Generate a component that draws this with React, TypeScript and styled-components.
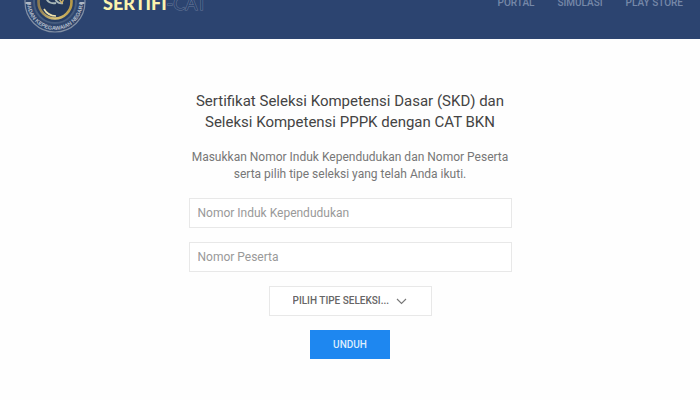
import React from "react";
import styled, { createGlobalStyle } from "styled-components";

const GlobalStyle = createGlobalStyle`
  * { box-sizing: border-box; }
  body {
    margin: 0;
    background: #fefefe;
    font-family: Roboto, "Liberation Sans", sans-serif;
    color: #666;
  }
`;

const Header = styled.header`
  display: flex;
  align-items: flex-end;
  height: 39px;
  overflow: hidden;
  background: #2c4470;
`;

const Bar = styled.div`
  flex: 1;
  display: flex;
  align-items: center;
  justify-content: space-between;
  height: 73px;
  padding: 0 17px 0 23px;
`;

const Brand = styled.a`
  display: flex;
  align-items: center;
  gap: 16px;
  text-decoration: none;
`;

const Wordmark = styled.span`
  font: 900 18px/20px Lato, sans-serif;
  color: #fbf3ae;
  white-space: nowrap;
`;

const Outlined = styled.span`
  font-weight: 400;
  color: #2c4470;
  -webkit-text-stroke: 1px #67799a;
  paint-order: stroke;
`;

const Nav = styled.nav`
  display: flex;
  gap: 23px;
`;

const NavLink = styled.a`
  font-size: 10px;
  font-weight: 500;
  line-height: 14px;
  color: #7688a8;
  text-decoration: none;
  text-transform: uppercase;
`;

const Content = styled.main`
  display: flex;
  justify-content: center;
  padding: 52px 16px 40px;
`;

const Form = styled.form`
  display: flex;
  flex-direction: column;
  align-items: center;
  width: 100%;
  max-width: 323px;
  text-align: center;
`;

const Title = styled.h1`
  margin: 0 0 16px;
  font-size: 15px;
  line-height: 21px;
  font-weight: 400;
  color: #444;
  white-space: nowrap;
`;

const Intro = styled.p`
  margin: 0 0 15px;
  font-size: 12px;
  line-height: 17px;
  color: #777;
  white-space: nowrap;
`;

const Field = styled.input`
  width: 100%;
  height: 30px;
  margin-bottom: 14px;
  padding: 0 8px;
  border: 1px solid #e8e8e8;
  border-radius: 0;
  background: #fff;
  font: 400 12px/18px Roboto, sans-serif;
  color: #555;
  &::placeholder { color: #999; opacity: 1; }
`;

const SelectBox = styled.div`
  display: grid;
  align-items: center;
  margin-bottom: 14px;
  svg {
    grid-area: 1 / 1;
    justify-self: end;
    margin-right: 25px;
    pointer-events: none;
  }
`;

const Select = styled.select`
  grid-area: 1 / 1;
  appearance: none;
  width: 163px;
  height: 30px;
  padding: 0 32px 0 23px;
  border: 1px solid #e8e8e8;
  border-radius: 0;
  background: #fff;
  font: 500 10px/16px Roboto, sans-serif;
  color: #666;
`;

const Submit = styled.button`
  height: 29px;
  padding: 0 23px;
  border: 0;
  background: #1e87f0;
  font: 500 10px/16px Roboto, sans-serif;
  color: #dcecfd;
`;

const Seal = () => (
  <svg width="64" height="64" viewBox="0 0 64 64" role="img" aria-label="Badan Kepegawaian Negara">
    <defs>
      <linearGradient id="ring" x1="0" y1="0" x2="1" y2="0">
        <stop offset="0" stopColor="#8d7b50" />
        <stop offset="0.5" stopColor="#dcc579" />
        <stop offset="1" stopColor="#b79a48" />
      </linearGradient>
      <path id="arc" d="M4 31a28 28 0 0 0 56 0" />
    </defs>
    <circle cx="32" cy="31" r="30" fill="#2f466e" stroke="#8390a5" strokeWidth="1.2" />
    <circle cx="32" cy="31" r="21" fill="#263d65" stroke="#465c7e" strokeWidth="2" />
    <circle cx="32" cy="31" r="16.5" fill="#24385a" stroke="url(#ring)" strokeWidth="2.6" />
    <path d="M21 38a14 14 0 0 0 12 7" fill="none" stroke="#efe2ac" strokeWidth="1.6" />
    <path d="M23 26c1 5 5 7 10 6M32 25c0 5 3 8 8 7" fill="none" stroke="#a9b8b8" strokeWidth="2" />
    <path d="M36 28l3 4 2-5" fill="none" stroke="#c9ae66" strokeWidth="1.4" />
    <path d="M2.500 32h5M56.500 32h5" stroke="#a8b1bd" strokeWidth="2" />
    <text fontFamily="Liberation Sans, sans-serif" fontSize="5.5" fontWeight="700" fill="#b4bdca" textAnchor="middle">
      <textPath href="#arc" startOffset="50%">BADAN KEPEGAWAIAN NEGARA</textPath>
    </text>
  </svg>
);

const Chevron = () => (
  <svg width="11" height="7" viewBox="0 0 11 7" fill="none" stroke="#777" strokeWidth="1.1" aria-hidden="true">
    <path d="M1 1l4.500 4.500L10 1" />
  </svg>
);

const links = ["Portal", "Simulasi", "Play Store"];

export default function App() {
  return (
    <>
      <GlobalStyle />
      <Header>
        <Bar>
          <Brand href="#">
            <Seal />
            <Wordmark>SERTIFI<Outlined>-CAT</Outlined></Wordmark>
          </Brand>
          <Nav>
            {links.map((label) => (
              <NavLink key={label} href="#">{label}</NavLink>
            ))}
          </Nav>
        </Bar>
      </Header>
      <Content>
        <Form onSubmit={(event) => event.preventDefault()}>
          <Title>
            Sertifikat Seleksi Kompetensi Dasar (SKD) dan
            <br />
            Seleksi Kompetensi PPPK dengan CAT BKN
          </Title>
          <Intro>
            Masukkan Nomor Induk Kependudukan dan Nomor Peserta
            <br />
            serta pilih tipe seleksi yang telah Anda ikuti.
          </Intro>
          <Field aria-label="Nomor Induk Kependudukan" placeholder="Nomor Induk Kependudukan" />
          <Field aria-label="Nomor Peserta" placeholder="Nomor Peserta" />
          <SelectBox>
            <Select aria-label="Pilih tipe seleksi">
              <option>PILIH TIPE SELEKSI...</option>
            </Select>
            <Chevron />
          </SelectBox>
          <Submit type="submit">UNDUH</Submit>
        </Form>
      </Content>
    </>
  );
}
